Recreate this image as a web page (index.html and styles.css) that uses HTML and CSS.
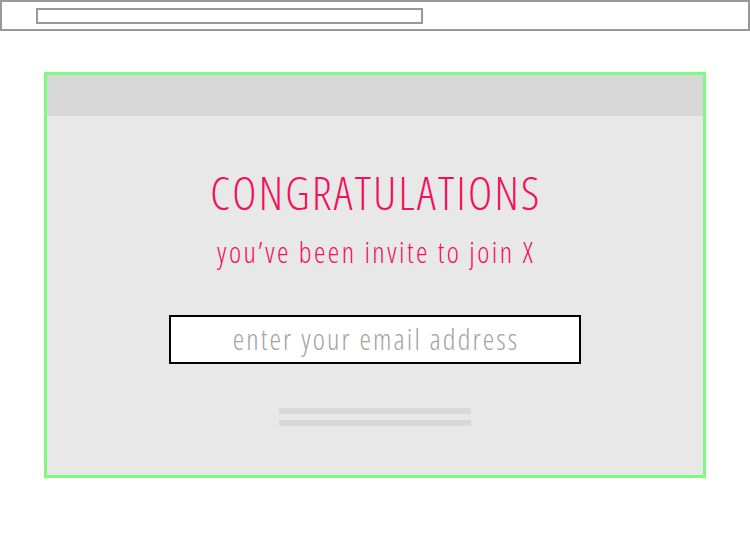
FILE: index.html
```html
<!DOCTYPE html>
<html>
<head>
<meta charset="utf-8">
<link rel="stylesheet" href="styles.css">
</head>
<body>
<div class="topbar"><div class="address"></div></div>
<div class="card">
  <div class="card-header"></div>
  <div class="card-body">
    <h1 class="title">CONGRATULATIONS</h1>
    <p class="subtitle">you’ve been invite to join X</p>
    <div class="email-input">enter your email address</div>
    <div class="lines">
      <div class="line"></div>
      <div class="line"></div>
    </div>
  </div>
</div>
</body>
</html>
```
FILE: styles.css
```css
html, body {
  margin: 0;
  padding: 0;
  background: #ffffff;
}
body {
  font-family: "Open Sans", "DejaVu Sans Condensed", sans-serif;
  width: 750px;
  height: 550px;
  overflow: hidden;
}
.topbar {
  box-sizing: border-box;
  height: 31px;
  border: 2px solid #999999;
  padding: 6px 0 0 34px;
}
.address {
  box-sizing: border-box;
  width: 387px;
  height: 16px;
  border: 2px solid #999999;
}
.card {
  box-sizing: border-box;
  margin: 41px 0 0 44px;
  width: 662px;
  height: 406px;
  border: 3px solid #7dfb7d;
  background: #e8e8e8;
  display: flex;
  flex-direction: column;
}
.card-header {
  height: 41px;
  background: #d8d8d8;
}
.card-body {
  display: flex;
  flex-direction: column;
  align-items: center;
  padding-top: 49px;
}
.title {
  margin: 0;
  font-weight: 300;
  font-stretch: 75%;
  letter-spacing: 2.3px;
  padding-left: 2px;
  font-size: 46px;
  line-height: 54px;
  color: #f2115a;
}
.subtitle {
  margin: 15px 0 0;
  font-weight: 300;
  font-stretch: 75%;
  letter-spacing: 2.45px;
  padding-left: 2px;
  font-size: 29px;
  line-height: 36px;
  color: #f2115a;
}
.email-input {
  box-sizing: border-box;
  margin-top: 45px;
  width: 412px;
  height: 49px;
  border: 2px solid #000000;
  background: #ffffff;
  color: #a3a3a3;
  font-weight: 300;
  font-stretch: 75%;
  letter-spacing: 2.15px;
  padding-left: 2px;
  font-size: 29px;
  line-height: 44px;
  text-align: center;
}
.lines {
  margin-top: 44px;
  display: flex;
  flex-direction: column;
  gap: 6px;
}
.line {
  width: 192px;
  height: 6px;
  background: #d8d8d8;
}
```
